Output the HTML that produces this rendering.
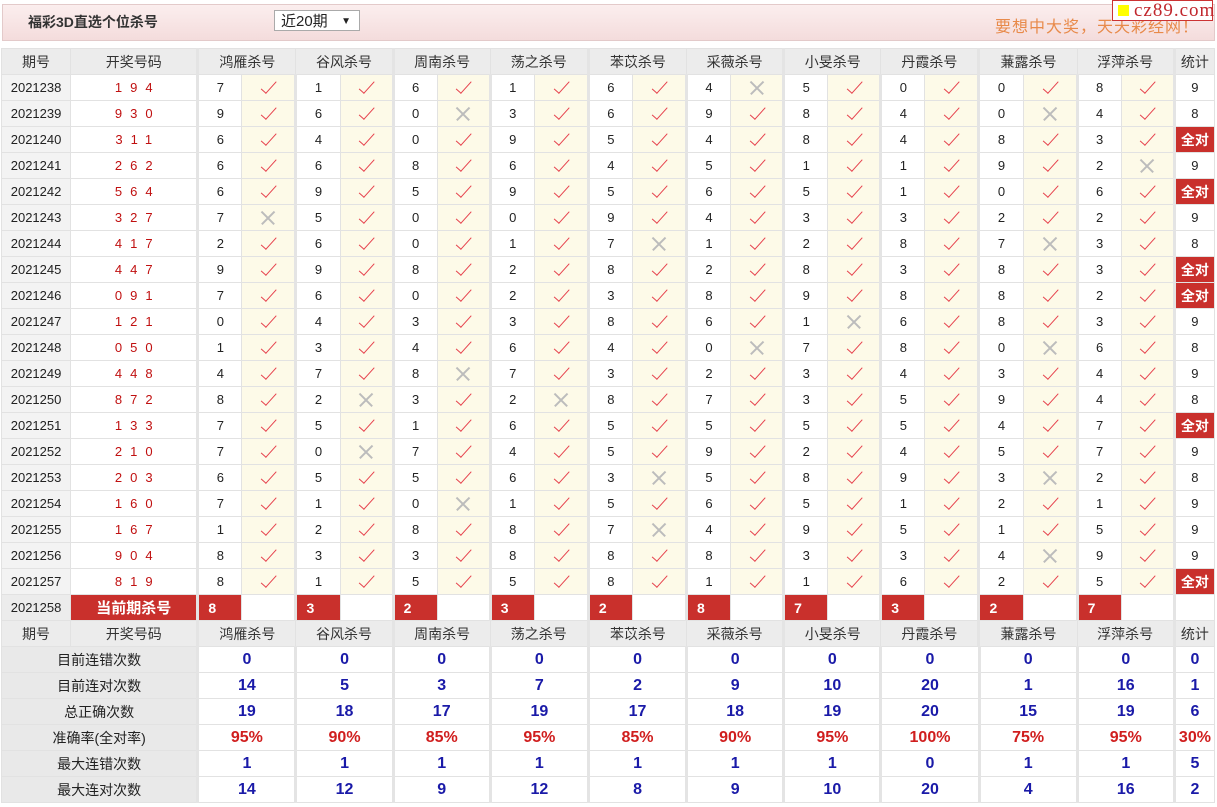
<!DOCTYPE html>
<html><head><meta charset="utf-8"><style>
body{margin:0;background:#fff;font-family:"Liberation Sans","Noto Sans CJK SC",sans-serif;width:1217px;height:807px;overflow:hidden;position:relative}
.top{position:absolute;left:2px;top:4px;width:1211px;height:35px;background:linear-gradient(#fbeeee,#f4dcdc);border:1px solid #e3caca}
.title{position:absolute;left:28px;top:12px;font-size:14px;font-weight:bold;color:#333}
.sel{position:absolute;left:274px;top:10px;width:86px;height:21px;border:1px solid #aaa;background:#fff;font-size:15px;color:#222;line-height:21px;padding-left:6px;box-sizing:border-box}
.sel span{position:absolute;right:8px;top:0;font-size:10px}
.slogan{position:absolute;left:995px;top:13px;font-size:16px;color:#e88a4a;letter-spacing:1px}
.logo{position:absolute;left:1112px;top:0;width:101px;height:21px;background:#fff;border:1px solid #c33;box-sizing:border-box;font-family:"Liberation Serif",serif;font-size:19px;color:#c1272d;line-height:19px;padding-left:21px;letter-spacing:1px}
.logo i{position:absolute;left:5px;top:4px;width:11px;height:11px;background:#ff0}
table{position:absolute;left:1px;top:48px;border-collapse:collapse;table-layout:fixed;width:1214px}
td{border:1px solid #e2e2e2;height:25px;padding:0;text-align:center;font-size:13px;color:#222;white-space:nowrap;overflow:hidden}
tr>td:nth-child(odd):not(:first-child){border-left:3px solid #e4e4e4}
tr.h td{background:#ececec;font-size:14px;color:#333}
tr.h td:first-child,tr.d td:first-child,tr.c td:first-child{background:#ececec}
tr.d td:first-child{background:#f3f3f3;font-size:13px}
td.k{color:#c01010;letter-spacing:8px;text-indent:8px;font-size:13px}
td.y,td.x{background:#fdfae8;position:relative}
td.y::after{content:"";position:absolute;left:50%;top:50%;width:6px;height:15px;border:solid #e6404c;border-width:0 1.6px 1.6px 0;transform:translate(-40%,-65%) rotate(42deg)}
td.x::before,td.x::after{content:"";position:absolute;left:50%;top:50%;width:18px;height:1.5px;background:#bcbcbc;margin:-1px 0 0 -9px;transform:rotate(45deg)}
td.x::after{transform:rotate(-45deg)}
td.q{background:#c9302c;color:#fff;font-weight:bold;font-size:14px}
tr.c td.r{background:#c9302c;color:#fff;font-weight:bold;text-align:left;padding-left:9px;font-size:14px}
tr.c td.ct{background:#c9302c;color:#fff;font-weight:bold;font-size:15px}
tr.s td{font-weight:bold;font-size:16px;color:#1a1aa8}
tr.s td:first-child{background:#e9e9e9;font-weight:normal;font-size:14px;color:#222}
tr.p td{color:#d01e1e}
tr.p td:first-child{color:#222}
</style></head><body>
<div class="top"></div>
<div class="title">福彩3D直选个位杀号</div>
<div class="sel">近20期<span>▼</span></div>
<div class="slogan">要想中大奖，天天彩经网！</div>
<div class="logo"><i></i>cz89.com</div>
<table>
<colgroup><col style="width:69px"><col style="width:127px"><col style="width:44px"><col style="width:54px"><col style="width:44px"><col style="width:53px"><col style="width:44px"><col style="width:53px"><col style="width:44px"><col style="width:54px"><col style="width:44px"><col style="width:54px"><col style="width:44px"><col style="width:53px"><col style="width:44px"><col style="width:53px"><col style="width:44px"><col style="width:54px"><col style="width:44px"><col style="width:54px"><col style="width:44px"><col style="width:53px"><col style="width:40px"></colgroup>
<tr class="h"><td>期号</td><td>开奖号码</td><td colspan="2">鸿雁杀号</td><td colspan="2">谷风杀号</td><td colspan="2">周南杀号</td><td colspan="2">荡之杀号</td><td colspan="2">苯苡杀号</td><td colspan="2">采薇杀号</td><td colspan="2">小旻杀号</td><td colspan="2">丹霞杀号</td><td colspan="2">蒹露杀号</td><td colspan="2">浮萍杀号</td><td>统计</td></tr>
<tr class="d"><td>2021238</td><td class="k">194</td><td>7</td><td class="y"></td><td>1</td><td class="y"></td><td>6</td><td class="y"></td><td>1</td><td class="y"></td><td>6</td><td class="y"></td><td>4</td><td class="x"></td><td>5</td><td class="y"></td><td>0</td><td class="y"></td><td>0</td><td class="y"></td><td>8</td><td class="y"></td><td>9</td></tr>
<tr class="d"><td>2021239</td><td class="k">930</td><td>9</td><td class="y"></td><td>6</td><td class="y"></td><td>0</td><td class="x"></td><td>3</td><td class="y"></td><td>6</td><td class="y"></td><td>9</td><td class="y"></td><td>8</td><td class="y"></td><td>4</td><td class="y"></td><td>0</td><td class="x"></td><td>4</td><td class="y"></td><td>8</td></tr>
<tr class="d"><td>2021240</td><td class="k">311</td><td>6</td><td class="y"></td><td>4</td><td class="y"></td><td>0</td><td class="y"></td><td>9</td><td class="y"></td><td>5</td><td class="y"></td><td>4</td><td class="y"></td><td>8</td><td class="y"></td><td>4</td><td class="y"></td><td>8</td><td class="y"></td><td>3</td><td class="y"></td><td class="q">全对</td></tr>
<tr class="d"><td>2021241</td><td class="k">262</td><td>6</td><td class="y"></td><td>6</td><td class="y"></td><td>8</td><td class="y"></td><td>6</td><td class="y"></td><td>4</td><td class="y"></td><td>5</td><td class="y"></td><td>1</td><td class="y"></td><td>1</td><td class="y"></td><td>9</td><td class="y"></td><td>2</td><td class="x"></td><td>9</td></tr>
<tr class="d"><td>2021242</td><td class="k">564</td><td>6</td><td class="y"></td><td>9</td><td class="y"></td><td>5</td><td class="y"></td><td>9</td><td class="y"></td><td>5</td><td class="y"></td><td>6</td><td class="y"></td><td>5</td><td class="y"></td><td>1</td><td class="y"></td><td>0</td><td class="y"></td><td>6</td><td class="y"></td><td class="q">全对</td></tr>
<tr class="d"><td>2021243</td><td class="k">327</td><td>7</td><td class="x"></td><td>5</td><td class="y"></td><td>0</td><td class="y"></td><td>0</td><td class="y"></td><td>9</td><td class="y"></td><td>4</td><td class="y"></td><td>3</td><td class="y"></td><td>3</td><td class="y"></td><td>2</td><td class="y"></td><td>2</td><td class="y"></td><td>9</td></tr>
<tr class="d"><td>2021244</td><td class="k">417</td><td>2</td><td class="y"></td><td>6</td><td class="y"></td><td>0</td><td class="y"></td><td>1</td><td class="y"></td><td>7</td><td class="x"></td><td>1</td><td class="y"></td><td>2</td><td class="y"></td><td>8</td><td class="y"></td><td>7</td><td class="x"></td><td>3</td><td class="y"></td><td>8</td></tr>
<tr class="d"><td>2021245</td><td class="k">447</td><td>9</td><td class="y"></td><td>9</td><td class="y"></td><td>8</td><td class="y"></td><td>2</td><td class="y"></td><td>8</td><td class="y"></td><td>2</td><td class="y"></td><td>8</td><td class="y"></td><td>3</td><td class="y"></td><td>8</td><td class="y"></td><td>3</td><td class="y"></td><td class="q">全对</td></tr>
<tr class="d"><td>2021246</td><td class="k">091</td><td>7</td><td class="y"></td><td>6</td><td class="y"></td><td>0</td><td class="y"></td><td>2</td><td class="y"></td><td>3</td><td class="y"></td><td>8</td><td class="y"></td><td>9</td><td class="y"></td><td>8</td><td class="y"></td><td>8</td><td class="y"></td><td>2</td><td class="y"></td><td class="q">全对</td></tr>
<tr class="d"><td>2021247</td><td class="k">121</td><td>0</td><td class="y"></td><td>4</td><td class="y"></td><td>3</td><td class="y"></td><td>3</td><td class="y"></td><td>8</td><td class="y"></td><td>6</td><td class="y"></td><td>1</td><td class="x"></td><td>6</td><td class="y"></td><td>8</td><td class="y"></td><td>3</td><td class="y"></td><td>9</td></tr>
<tr class="d"><td>2021248</td><td class="k">050</td><td>1</td><td class="y"></td><td>3</td><td class="y"></td><td>4</td><td class="y"></td><td>6</td><td class="y"></td><td>4</td><td class="y"></td><td>0</td><td class="x"></td><td>7</td><td class="y"></td><td>8</td><td class="y"></td><td>0</td><td class="x"></td><td>6</td><td class="y"></td><td>8</td></tr>
<tr class="d"><td>2021249</td><td class="k">448</td><td>4</td><td class="y"></td><td>7</td><td class="y"></td><td>8</td><td class="x"></td><td>7</td><td class="y"></td><td>3</td><td class="y"></td><td>2</td><td class="y"></td><td>3</td><td class="y"></td><td>4</td><td class="y"></td><td>3</td><td class="y"></td><td>4</td><td class="y"></td><td>9</td></tr>
<tr class="d"><td>2021250</td><td class="k">872</td><td>8</td><td class="y"></td><td>2</td><td class="x"></td><td>3</td><td class="y"></td><td>2</td><td class="x"></td><td>8</td><td class="y"></td><td>7</td><td class="y"></td><td>3</td><td class="y"></td><td>5</td><td class="y"></td><td>9</td><td class="y"></td><td>4</td><td class="y"></td><td>8</td></tr>
<tr class="d"><td>2021251</td><td class="k">133</td><td>7</td><td class="y"></td><td>5</td><td class="y"></td><td>1</td><td class="y"></td><td>6</td><td class="y"></td><td>5</td><td class="y"></td><td>5</td><td class="y"></td><td>5</td><td class="y"></td><td>5</td><td class="y"></td><td>4</td><td class="y"></td><td>7</td><td class="y"></td><td class="q">全对</td></tr>
<tr class="d"><td>2021252</td><td class="k">210</td><td>7</td><td class="y"></td><td>0</td><td class="x"></td><td>7</td><td class="y"></td><td>4</td><td class="y"></td><td>5</td><td class="y"></td><td>9</td><td class="y"></td><td>2</td><td class="y"></td><td>4</td><td class="y"></td><td>5</td><td class="y"></td><td>7</td><td class="y"></td><td>9</td></tr>
<tr class="d"><td>2021253</td><td class="k">203</td><td>6</td><td class="y"></td><td>5</td><td class="y"></td><td>5</td><td class="y"></td><td>6</td><td class="y"></td><td>3</td><td class="x"></td><td>5</td><td class="y"></td><td>8</td><td class="y"></td><td>9</td><td class="y"></td><td>3</td><td class="x"></td><td>2</td><td class="y"></td><td>8</td></tr>
<tr class="d"><td>2021254</td><td class="k">160</td><td>7</td><td class="y"></td><td>1</td><td class="y"></td><td>0</td><td class="x"></td><td>1</td><td class="y"></td><td>5</td><td class="y"></td><td>6</td><td class="y"></td><td>5</td><td class="y"></td><td>1</td><td class="y"></td><td>2</td><td class="y"></td><td>1</td><td class="y"></td><td>9</td></tr>
<tr class="d"><td>2021255</td><td class="k">167</td><td>1</td><td class="y"></td><td>2</td><td class="y"></td><td>8</td><td class="y"></td><td>8</td><td class="y"></td><td>7</td><td class="x"></td><td>4</td><td class="y"></td><td>9</td><td class="y"></td><td>5</td><td class="y"></td><td>1</td><td class="y"></td><td>5</td><td class="y"></td><td>9</td></tr>
<tr class="d"><td>2021256</td><td class="k">904</td><td>8</td><td class="y"></td><td>3</td><td class="y"></td><td>3</td><td class="y"></td><td>8</td><td class="y"></td><td>8</td><td class="y"></td><td>8</td><td class="y"></td><td>3</td><td class="y"></td><td>3</td><td class="y"></td><td>4</td><td class="x"></td><td>9</td><td class="y"></td><td>9</td></tr>
<tr class="d"><td>2021257</td><td class="k">819</td><td>8</td><td class="y"></td><td>1</td><td class="y"></td><td>5</td><td class="y"></td><td>5</td><td class="y"></td><td>8</td><td class="y"></td><td>1</td><td class="y"></td><td>1</td><td class="y"></td><td>6</td><td class="y"></td><td>2</td><td class="y"></td><td>5</td><td class="y"></td><td class="q">全对</td></tr>
<tr class="c"><td>2021258</td><td class="ct">当前期杀号</td><td class="r">8</td><td></td><td class="r">3</td><td></td><td class="r">2</td><td></td><td class="r">3</td><td></td><td class="r">2</td><td></td><td class="r">8</td><td></td><td class="r">7</td><td></td><td class="r">3</td><td></td><td class="r">2</td><td></td><td class="r">7</td><td></td><td></td></tr>
<tr class="h"><td>期号</td><td>开奖号码</td><td colspan="2">鸿雁杀号</td><td colspan="2">谷风杀号</td><td colspan="2">周南杀号</td><td colspan="2">荡之杀号</td><td colspan="2">苯苡杀号</td><td colspan="2">采薇杀号</td><td colspan="2">小旻杀号</td><td colspan="2">丹霞杀号</td><td colspan="2">蒹露杀号</td><td colspan="2">浮萍杀号</td><td>统计</td></tr>
</table>
<table style="top:646px">
<colgroup><col style="width:196px"><col style="width:98px"><col style="width:97px"><col style="width:97px"><col style="width:98px"><col style="width:98px"><col style="width:97px"><col style="width:97px"><col style="width:98px"><col style="width:98px"><col style="width:97px"><col style="width:40px"></colgroup>
<tr class="s"><td>目前连错次数</td><td>0</td><td>0</td><td>0</td><td>0</td><td>0</td><td>0</td><td>0</td><td>0</td><td>0</td><td>0</td><td>0</td></tr>
<tr class="s"><td>目前连对次数</td><td>14</td><td>5</td><td>3</td><td>7</td><td>2</td><td>9</td><td>10</td><td>20</td><td>1</td><td>16</td><td>1</td></tr>
<tr class="s"><td>总正确次数</td><td>19</td><td>18</td><td>17</td><td>19</td><td>17</td><td>18</td><td>19</td><td>20</td><td>15</td><td>19</td><td>6</td></tr>
<tr class="s p"><td>准确率(全对率)</td><td>95%</td><td>90%</td><td>85%</td><td>95%</td><td>85%</td><td>90%</td><td>95%</td><td>100%</td><td>75%</td><td>95%</td><td>30%</td></tr>
<tr class="s"><td>最大连错次数</td><td>1</td><td>1</td><td>1</td><td>1</td><td>1</td><td>1</td><td>1</td><td>0</td><td>1</td><td>1</td><td>5</td></tr>
<tr class="s"><td>最大连对次数</td><td>14</td><td>12</td><td>9</td><td>12</td><td>8</td><td>9</td><td>10</td><td>20</td><td>4</td><td>16</td><td>2</td></tr>
</table>
<style>table[style] td{border-left:1px solid #e2e2e2}table[style] td:not(:first-child){border-left:3px solid #e4e4e4}</style>
</body></html>
